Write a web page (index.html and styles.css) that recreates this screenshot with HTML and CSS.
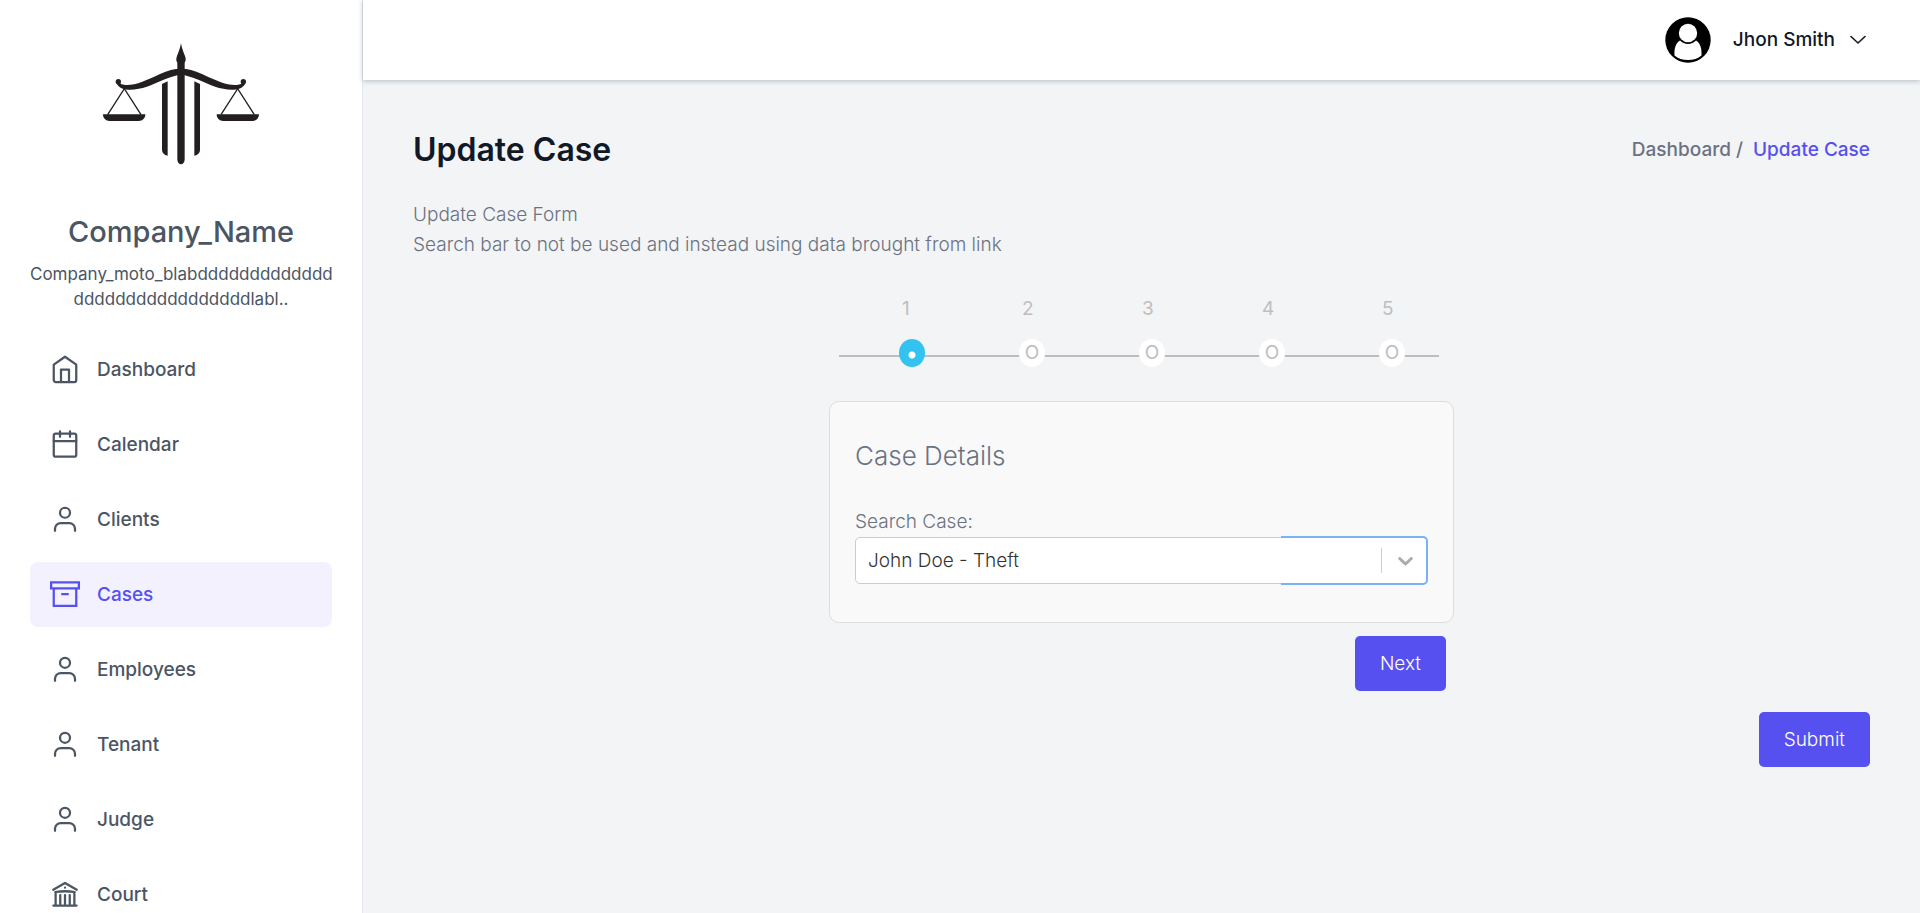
FILE: index.html
```html
<!DOCTYPE html>
<html lang="en">
<head>
<meta charset="utf-8">
<meta name="viewport" content="width=device-width, initial-scale=1">
<title>Update Case</title>
<link rel="stylesheet" href="styles.css">
</head>
<body>
<svg class="sprite" aria-hidden="true">
  <symbol id="i-home" viewBox="0 0 24 24"><path d="M12 1.4 3 7.7V20a1.7 1.7 0 0 0 1.700 1.700h14.600A1.700 1.700 0 0 0 21 20V7.700Z"/><path d="M8.800 21.500v-9.900h6.400v9.900"/></symbol>
  <symbol id="i-calendar" viewBox="0 0 24 24"><rect x="3" y="2.800" width="18" height="18.500" rx="1.600"/><path d="M3 8.800h18M8 1v4.400M16 1v4.400"/></symbol>
  <symbol id="i-user" viewBox="0 0 24 24"><circle cx="12" cy="6.200" r="4"/><path d="M4 20.600V19a4.600 4.600 0 0 1 4.600-4.600h6.800A4.600 4.600 0 0 1 20 19v1.600"/></symbol>
  <symbol id="i-archive" viewBox="0 0 24 24"><path stroke-linecap="butt" stroke-linejoin="miter" d="M.9 1.900h22.200v4.800H.9ZM3 6.700v14h18v-14M9 11.200h6"/></symbol>
  <symbol id="i-court" viewBox="0 0 24 24"><path d="M2.600 7.800 12 2.400l9.400 5.400M4.200 9.600Q12 8.400 19.800 9.600M4.500 9.600v10M19.500 9.600v10M2.700 20.400h18.600M8.200 12v7M12 12v7M15.800 12v7M12 6v.1"/></symbol>
</svg>
<div class="app">
  <aside class="sidebar">
    <svg class="logo" viewBox="3 0 600 450" role="img" aria-label="Scales of justice">
      <g fill="#231f20">
        <path d="M303 40c3 16 7 26 12 38 3 8 3 14-1 20v290c0 20-22 20-22 0V98c-4-6-4-12-1-20 5-12 9-22 12-38Z"/>
        <path d="M303 116c20 0 40 5 63 16 40 19 75 35 104 33 12-1 16-4 19-9l6 6c-7 12-18 16-33 17-38 2-70-14-105-29-22-9-40-15-54-15s-32 6-54 15c-35 15-67 31-105 29-15-1-26-5-33-17l6-6c3 5 7 8 19 9 29 2 64-14 104-33 23-11 43-16 63-16Z"/>
        <circle cx="115" cy="155" r="8"/><circle cx="490" cy="155" r="8"/>
        <path d="M246 162l17-8v223q-17-4-17-18ZM360 162l-17-8v223q17-4 17-18Z"/>
        <path d="M69 253h127c0 12-8 20-20 20H89c-12 0-20-8-20-20ZM410 253h127c0 12-8 20-20 20h-87c-12 0-20-8-20-20Z"/>
      </g>
      <path d="M83 254l50-78 50 78M423 254l50-78 50 78" fill="none" stroke="#231f20" stroke-width="4"/>
    </svg>
    <h2 class="company">Company_Name</h2>
    <p class="motto">Company_moto_blabddddddddddddd<wbr>dddddddddddddddddlabl..</p>
    <nav class="nav" aria-label="Main">
      <a class="nav-item" href="#"><svg class="icon"><use href="#i-home"/></svg>Dashboard</a>
      <a class="nav-item" href="#"><svg class="icon"><use href="#i-calendar"/></svg>Calendar</a>
      <a class="nav-item" href="#"><svg class="icon"><use href="#i-user"/></svg>Clients</a>
      <a class="nav-item active" href="#" aria-current="page"><svg class="icon"><use href="#i-archive"/></svg>Cases</a>
      <a class="nav-item" href="#"><svg class="icon"><use href="#i-user"/></svg>Employees</a>
      <a class="nav-item" href="#"><svg class="icon"><use href="#i-user"/></svg>Tenant</a>
      <a class="nav-item" href="#"><svg class="icon"><use href="#i-user"/></svg>Judge</a>
      <a class="nav-item" href="#"><svg class="icon"><use href="#i-court"/></svg>Court</a>
    </nav>
  </aside>
  <div class="main">
    <header class="topbar">
      <button class="profile" type="button">
        <svg class="avatar" viewBox="0 0 46 46" aria-hidden="true">
          <circle cx="23" cy="23" r="22.700"/>
          <path fill="#fff" d="M9.500 38.500C9 31 11 26 15 23.500a11 11 0 0 0 16 0C35 26 37 31 36.500 38.500 30 44.500 16 44.500 9.500 38.500Z"/>
          <circle cx="23" cy="16" r="9.200" fill="#fff"/>
        </svg>
        <span>Jhon Smith</span>
        <svg class="chevron" viewBox="0 0 16 10" aria-hidden="true"><path d="M1 1.500l7 6.500 7-6.500"/></svg>
      </button>
    </header>
    <main class="content">
      <div class="page-head">
        <h1 class="title">Update Case</h1>
        <nav class="crumbs" aria-label="Breadcrumb"><a href="#">Dashboard /</a><a class="current" href="#" aria-current="page">Update Case</a></nav>
      </div>
      <p class="intro">Update Case Form<br>Search bar to not be used and instead using data brought from link</p>
      <form class="wizard">
        <ol class="steps">
          <li class="step current"><span class="num">1</span><span class="dot"></span></li>
          <li class="step"><span class="num">2</span><span class="dot">O</span></li>
          <li class="step"><span class="num">3</span><span class="dot">O</span></li>
          <li class="step"><span class="num">4</span><span class="dot">O</span></li>
          <li class="step"><span class="num">5</span><span class="dot">O</span></li>
        </ol>
        <section class="card">
          <h3 class="card-title">Case Details</h3>
          <label class="label" for="case">Search Case:</label>
          <div class="select-wrap">
            <select class="select" id="case"><option>John Doe - Theft</option></select>
            <span class="indicator"><svg viewBox="0 0 20 20" aria-hidden="true"><path d="M4.516 7.548c0.436-0.446 1.043-0.481 1.576 0l3.908 3.747 3.908-3.747c0.533-0.481 1.141-0.446 1.574 0 0.436 0.445 0.408 1.197 0 1.615-0.406 0.418-4.695 4.502-4.695 4.502-0.217 0.223-0.502 0.335-0.787 0.335s-0.570-0.112-0.789-0.335c0 0-4.287-4.084-4.695-4.502s-0.436-1.170 0-1.615z"/></svg></span>
          </div>
        </section>
        <div class="wizard-actions"><button class="btn" type="button">Next</button></div>
      </form>
      <div class="page-actions"><button class="btn" type="submit">Submit</button></div>
    </main>
  </div>
</div>
</body>
</html>
```
FILE: styles.css
```css
*, *::before, *::after { box-sizing: border-box; }

body {
  margin: 0;
  background: #f3f4f6;
  color: #6b7280;
  font-family: Inter, "Liberation Sans", sans-serif;
  font-size: 19px;
  font-weight: 300;
  line-height: 30px;
}

h1, h2, h3, p, ol { margin: 0; padding: 0; }
a { color: inherit; text-decoration: none; }
button, select { font: inherit; }
.sprite { position: absolute; width: 0; height: 0; }

.app { display: flex; height: 100vh; overflow: hidden; }

/* Sidebar */
.sidebar {
  flex: 0 0 363px;
  padding: 30px;
  background: #fff;
  border-right: 1px solid #e5e7eb;
  color: #4b5563;
  overflow: hidden;
}
.logo { display: block; width: 200px; height: 150px; margin: 0 auto; }
.company {
  margin-top: 30px;
  font-size: 29px;
  font-weight: 500;
  line-height: 44px;
  text-align: center;
}
.motto {
  margin: 8px 0 25px;
  font-size: 17px;
  font-weight: 400;
  line-height: 25px;
  text-align: center;
}
.nav { display: flex; flex-direction: column; gap: 10px; }
.nav-item {
  display: flex;
  align-items: center;
  gap: 17px;
  height: 65px;
  padding: 0 20px;
  border-radius: 8px;
  font-weight: 500;
}
.nav-item.active { background: #f4f1ff; color: #5750f1; }
.icon {
  width: 30px;
  height: 30px;
  fill: none;
  stroke: currentColor;
  stroke-width: 1.8;
  stroke-linecap: round;
  stroke-linejoin: round;
}

/* Top bar */
.main { flex: 1; min-width: 0; display: flex; flex-direction: column; }
.topbar {
  display: flex;
  justify-content: flex-end;
  height: 80px;
  padding: 0 54px;
  background: #fff;
  box-shadow: 0 1px 5px rgba(100, 116, 139, .45);
}
.profile {
  display: flex;
  align-items: center;
  padding: 0;
  border: 0;
  background: none;
  color: #111827;
  font-weight: 500;
}
.avatar { width: 46px; height: 46px; margin-right: 22px; }
.chevron {
  width: 16px;
  height: 10px;
  margin-left: 15px;
  fill: none;
  stroke: currentColor;
  stroke-width: 1.6;
  stroke-linecap: round;
  stroke-linejoin: round;
}

/* Content */
.content { padding: 50px; }
.page-head { display: flex; justify-content: space-between; align-items: center; }
.title { color: #111827; font-size: 32px; font-weight: 600; line-height: 40px; }
.crumbs { display: flex; gap: 10px; font-weight: 500; }
.crumbs .current { color: #5750f1; }
.intro { margin-top: 30px; }

/* Wizard */
.wizard { width: 625px; max-width: 100%; margin: 34px auto 0; }
.steps { display: flex; padding: 0 15px 0 10px; list-style: none; color: #bebebe; }
.step {
  flex: 1;
  display: flex;
  flex-direction: column;
  align-items: center;
  gap: 15px;
  padding-left: 26px;
  background: linear-gradient(#bebebe, #bebebe) 0 61px / 100% 2px no-repeat;
}
.num { width: 20px; font-weight: 400; }
.dot {
  width: 26px;
  height: 28px;
  border-radius: 50%;
  background: #fff;
  font-weight: 400;
  line-height: 28px;
  text-align: center;
}
.step.current .dot { background: radial-gradient(circle at 13px 16px, #fff 3px, #33c3f0 4px); }

.card {
  margin-top: 34px;
  padding: 34px 25px 38px;
  border: 1px solid #ddd;
  border-radius: 10px;
  background: #f9f9f9;
}
.card-title { font-size: 26px; font-weight: 300; line-height: 40px; }
.label { display: block; margin-top: 31px; }
.select-wrap { position: relative; }
.select {
  display: block;
  width: 100%;
  height: 47px;
  padding: 0 12px;
  border: 1px solid #ccc;
  border-radius: 5px;
  background: #fff;
  color: #333;
  appearance: none;
}
.select-wrap::after {
  content: "";
  position: absolute;
  inset: -1px 0 -1px auto;
  width: 147px;
  border: 2px solid #79b2f8;
  border-left: 0;
  border-radius: 0 5px 5px 0;
  pointer-events: none;
}
.indicator {
  position: absolute;
  top: 11px;
  right: 0;
  width: 47px;
  height: 25px;
  border-left: 1px solid #ccc;
  display: grid;
  place-items: center;
  pointer-events: none;
}
.indicator svg { width: 25px; height: 25px; fill: #aaa; }

.wizard-actions { display: flex; justify-content: flex-end; padding: 13px 8px 0; }
.page-actions { display: flex; justify-content: flex-end; margin-top: 21px; }
.btn {
  height: 55px;
  padding: 0 25px;
  border: 0;
  border-radius: 5px;
  background: #5750f1;
  color: #fff;
}
```
